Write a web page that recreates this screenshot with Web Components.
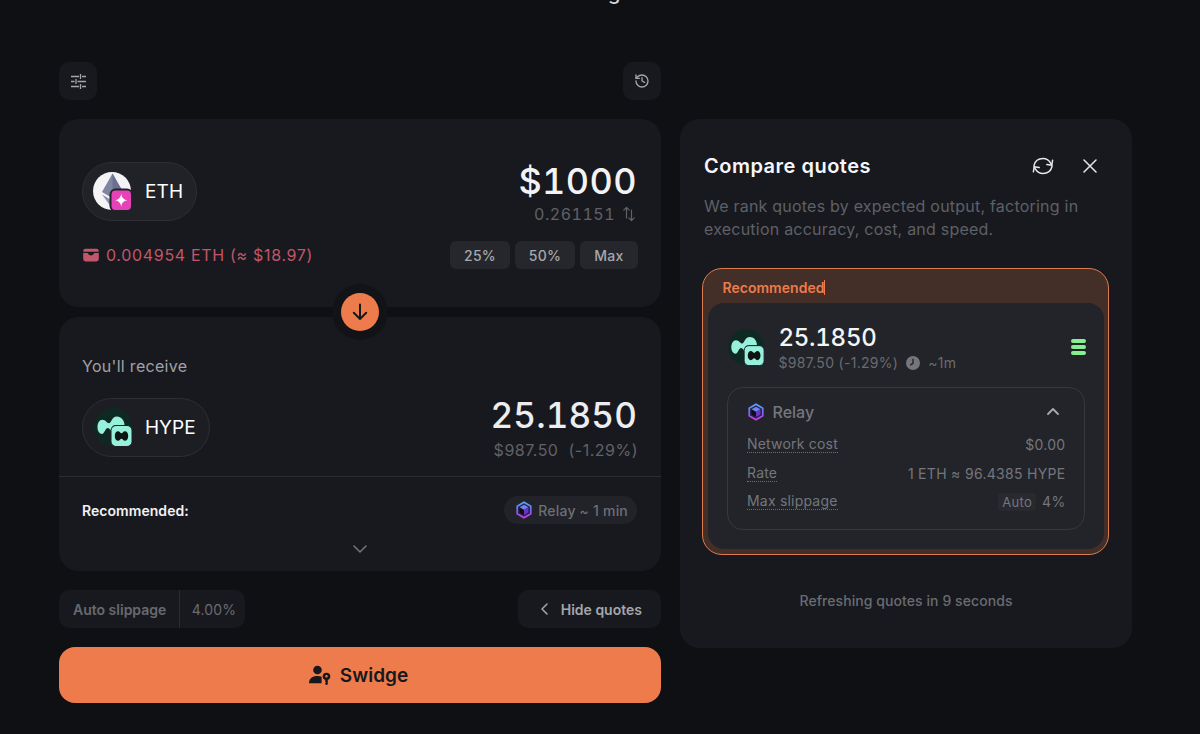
<!DOCTYPE html>
<html lang="en">
<head>
<meta charset="utf-8">
<title>Swidge</title>
<style>
  html, body { margin: 0; height: 100%; background: #0f1014; overflow: hidden; }
  body { font-family: Inter, "Liberation Sans", sans-serif; color: #fff; }
</style>
</head>
<body>
<swap-page></swap-page>

<script>
const ICONS = {
  sliders: `<svg viewBox="0 0 15 15" width="15" height="15" fill="none" stroke="currentColor" stroke-width="1.3"><path d="M0 2.500H8M11 2.500H15M0 7.500H3.500M6.500 7.500H15M0 12.500H8M11 12.500H15M9.500 0V5M5 5V10M9.500 10V15"/></svg>`,
  history: `<svg viewBox="0 0 24 24" width="16" height="16" fill="none" stroke="currentColor" stroke-width="2" stroke-linecap="round" stroke-linejoin="round"><path d="M3 12a9 9 0 1 0 9-9 9.700 9.700 0 0 0-6.700 2.700L3 8"/><path d="M3 3v5h5"/><path d="M12 7v5l4 2"/></svg>`,
  swap: `<svg viewBox="0 0 14 16" width="14" height="16" fill="none" stroke="currentColor" stroke-width="1.200" stroke-linecap="round" stroke-linejoin="round"><path d="M4.500 12V1.500M1.800 4.200l2.700-2.700 2.700 2.700"/><path d="M9.500 4v10.500M6.800 11.800l2.700 2.700 2.700-2.700"/></svg>`,
  wallet: `<svg viewBox="0 0 16 14" width="16" height="14"><path fill="currentColor" d="M2.600 0.800h10.800A2.400 2.400 0 0 1 15.800 3.200v.5H.2v-.5A2.400 2.400 0 0 1 2.600.8Z"/><path fill="currentColor" d="M.2 5h4.600c.5 1.500 1.700 2.400 3.200 2.400S10.700 6.500 11.200 5h4.600v6a2.400 2.400 0 0 1-2.400 2.400H2.600A2.400 2.400 0 0 1 .2 11Z"/></svg>`,
  down: `<svg viewBox="0 0 20 20" width="20" height="20" fill="none" stroke="#17181c" stroke-width="2" stroke-linecap="round" stroke-linejoin="round"><path d="M10 2.500V17M3.800 10.800 10 17l6.200-6.200"/></svg>`,
  chevDown: `<svg viewBox="0 0 16 10" width="16" height="10" fill="none" stroke="currentColor" stroke-width="1.500" stroke-linecap="round" stroke-linejoin="round"><path d="M2 2l6 6 6-6"/></svg>`,
  chevUp: `<svg viewBox="0 0 14 9" width="14" height="9" fill="none" stroke="currentColor" stroke-width="1.800" stroke-linecap="round" stroke-linejoin="round"><path d="M2 7 7 2l5 5"/></svg>`,
  chevLeft: `<svg viewBox="0 0 9 14" width="9" height="14" fill="none" stroke="currentColor" stroke-width="1.500" stroke-linecap="round" stroke-linejoin="round"><path d="M7 2 2 7l5 5"/></svg>`,
  refresh: `<svg viewBox="0 0 22 18" width="22" height="18" fill="none" stroke="currentColor" stroke-width="1.500" stroke-linecap="round" stroke-linejoin="round"><path d="M2 8.500C3 4.200 6.500 1.500 11 1.500c3.200 0 5.800 1.400 7.500 4.300l1.300 2.500"/><path d="M20.600 3.200 19.800 8.300l-5-.9"/><path d="M20 9.500c-1 4.300-4.500 7-9 7-3.200 0-5.800-1.400-7.500-4.300L2.200 9.700"/><path d="M1.400 14.800 2.200 9.700l5 .9"/></svg>`,
  close: `<svg viewBox="0 0 14 14" width="14" height="14" fill="none" stroke="currentColor" stroke-width="1.500" stroke-linecap="round"><path d="M1 1l12 12M13 1 1 13"/></svg>`,
  clock: `<svg viewBox="0 0 14 14" width="14" height="14"><circle cx="7" cy="7" r="7" fill="#74767c"/><path d="M7 3.200V7.300L4.600 8.800" fill="none" stroke="#22242a" stroke-width="1.400" stroke-linecap="round" stroke-linejoin="round"/></svg>`,
  bars: `<svg viewBox="0 0 16 16" width="16" height="16"><rect y="0" width="15" height="4" rx="2" fill="#86ef8f"/><rect y="6" width="15" height="4" rx="2" fill="#86ef8f"/><rect y="12" width="15" height="4" rx="2" fill="#86ef8f"/></svg>`,
  userKey: `<svg viewBox="0 0 22 20" width="22" height="20" fill="#17181c"><circle cx="8.500" cy="5" r="4.300"/><path d="M0 18.200c0-4.700 3.500-7.200 8.500-7.200 1.500 0 2.900.2 4.100.7v6.500H0Z"/><path fill-rule="evenodd" d="M17.500 7.800a3.700 3.700 0 0 1 1.300 7.200v4.200l-1.300 1-1.300-1v-.9l.8-.8-.8-.8V15a3.700 3.700 0 0 1 1.300-7.200Zm0 2.200a1.300 1.300 0 1 0 0 2.600 1.300 1.300 0 0 0 0-2.600Z"/></svg>`,
  eth: `<svg viewBox="0 0 40 40" width="40" height="40"><circle cx="19" cy="19" r="19" fill="#f4f4f6"/><path d="M19.500 1.500 9 20l10.500 6.200L30 20Z" fill="#7f84a3"/><path d="M19.500 1.500V26.200L30 20Z" fill="#6b7090"/><path d="M9 22.500 19.500 37 30 22.500l-10.500 6.200Z" fill="#8d91ad"/><rect x="17.500" y="17.500" width="21.500" height="21.500" rx="5" fill="#e643b8" stroke="#22232a" stroke-width="2"/><path d="M28.200 21.500c.5 4 2 5.900 6.300 6.800-4.300.8-5.800 2.700-6.300 6.800-.5-4.100-2-6-6.300-6.800 4.300-.9 5.800-2.800 6.300-6.800Z" fill="#fff"/></svg>`,
  hype: `<svg viewBox="0 0 40 40" width="40" height="40"><circle cx="19" cy="19" r="19" fill="#0f2922"/><path d="M3.500 19c0-4 2-7.200 4.800-7.200 3.600 0 4.500 3.500 6.700 3.500 2.300 0 2.500-6.800 8-6.800 4 0 7.500 3.700 7.500 8.500H22c-3 0-4.500 1.800-4.500 4v2.500c-1-1-1.800-3.500-3.800-3.500-2.400 0-3.200 6-5.700 6-2.600 0-4.500-3-4.500-6.500Z" fill="#97f0dc"/><rect x="17" y="17.500" width="21" height="21" rx="5" fill="#97f0dc" stroke="#1e2026" stroke-width="1"/><path d="M20.800 28c0-3 1.400-4.800 3.300-4.800 1.700 0 2.200 2 3.400 2s1.700-2 3.400-2c1.900 0 3.300 1.800 3.300 4.800s-1.400 4.800-3.300 4.800c-1.700 0-2.200-2-3.400-2s-1.700 2-3.400 2c-1.900 0-3.300-1.800-3.300-4.800Z" fill="#0c1512"/></svg>`,
  relay: `<svg viewBox="0 0 18 18" width="18" height="18"><defs><linearGradient id="r" x1="0" y1="0" x2="0" y2="1"><stop offset="0" stop-color="#58a6f7"/><stop offset=".5" stop-color="#6d6af2"/><stop offset="1" stop-color="#d03be6"/></linearGradient></defs><path d="M9 1.300 15.800 5.200V12.800L9 16.700 2.200 12.800V5.200Z" fill="#27204a" stroke="url(#r)" stroke-width="1.700" stroke-linejoin="round"/><path d="M9 3.800 13.400 6.300 9 8.800 4.600 6.300Z" fill="#6f86ee"/><path d="M13.400 6.300V11.400L9 13.900V8.800Z" fill="#6a35c4"/><path d="M4.600 6.800 9 9.300V13.900L4.600 11.400Z" fill="#0f0e16"/></svg>`
};

const BASE = `* { box-sizing: border-box; } svg { display: block; flex: none; }`;

function el(name, css, html) {
  customElements.define(name, class extends HTMLElement {
    connectedCallback() {
      if (this.shadowRoot) return;
      this.attachShadow({ mode: "open" });
      const icon = this.getAttribute("icon");
      this.shadowRoot.innerHTML = `<style>${BASE}${css}</style>` +
        html.replace(/\{icon\}/g, icon ? ICONS[icon] : "");
    }
  });
}

el("icon-button", `
  :host { display: flex; width: 38px; height: 38px; border-radius: 10px; background: #18191e;
    align-items: center; justify-content: center; color: #a4a6ab; }
`, `{icon}`);

el("token-pill", `
  :host { display: flex; align-items: center; height: 59px; border-radius: 30px; background: #202227;
    border: 1px solid #2d2f35; color: #fff; font-size: 19px; letter-spacing: .2px; }
  .logo { width: 40px; height: 40px; margin-left: 10px; margin-right: 12px; }
  :host([icon=hype]) .logo { margin-left: 11px; margin-right: 11px; margin-top: 1px; }
  :host([icon=hype]) { background: #1c1e23; letter-spacing: 0; }
  .text { padding-right: 15px; margin-top: -1px; }
`, `<span class="logo">{icon}</span><span class="text"><slot></slot></span>`);

el("pct-button", `
  :host { display: flex; align-items: center; justify-content: center; height: 28px; border-radius: 6px;
    background: #25272c; color: #a6a8ad; font-size: 14px; font-weight: 500; letter-spacing: .3px; }
`, `<slot></slot>`);

el("swap-card", `
  :host { display: block; background: #18191e; border-radius: 20px; }
`, `<slot></slot>`);

el("from-section", `
  :host { display: block; height: 188px; padding: 43px 24px 0 23px; }
  .top { display: flex; justify-content: space-between; }
  .amounts { display: flex; flex-direction: column; align-items: flex-end; }
  .usd { font-size: 36px; line-height: 36px; font-weight: 500; letter-spacing: .4px; color: #f3f3f5; margin-top: 1px;
    font-variant-numeric: tabular-nums; }
  .qty { display: flex; align-items: center; gap: 7px; margin-top: 5px; font-size: 16px; line-height: 20px;
    letter-spacing: .5px; color: #606267; padding-right: 1px; font-variant-numeric: tabular-nums; }
  .bottom { display: flex; justify-content: space-between; align-items: center; margin-top: 17px; }
  .bal { display: flex; align-items: center; gap: 7px; color: #c2566a; font-size: 16px; letter-spacing: .68px; margin-left: 1px; }
  .pcts { display: flex; gap: 5px; margin-right: -1px; }
  .pcts pct-button { width: 60px; }
  .pcts pct-button:last-child { width: 58px; }
`, `
  <div class="top">
    <token-pill icon="eth" style="width:115px">ETH</token-pill>
    <div class="amounts">
      <div class="usd">$1000</div>
      <div class="qty">0.261151 ${ICONS.swap}</div>
    </div>
  </div>
  <div class="bottom">
    <div class="bal">${ICONS.wallet}<span>0.004954 ETH (≈ $18.97)</span></div>
    <div class="pcts">
      <pct-button>25%</pct-button><pct-button>50%</pct-button><pct-button>Max</pct-button>
    </div>
  </div>
`);

el("to-section", `
  :host { display: block; height: 254px; }
  .main { height: 160px; padding: 39px 24px 0 23px; border-bottom: 1px solid #2a2c31; }
  .label { font-size: 16px; line-height: 20px; color: #a0a2a7; letter-spacing: .3px; }
  .row { display: flex; justify-content: space-between; margin-top: 22px; }
  .amounts { display: flex; flex-direction: column; align-items: flex-end; margin-top: -1px; }
  .out { font-size: 35px; line-height: 36px; font-weight: 500; letter-spacing: .15px; color: #ededf0;
    font-variant-numeric: tabular-nums; }
  .fiat { font-size: 16px; line-height: 20px; margin: 7px -1px 0 0; color: #606267; letter-spacing: .5px; white-space: pre; }
  .rec { display: flex; justify-content: space-between; align-items: center; padding: 19px 24px 0 23px; }
  .rec b { font-size: 14px; font-weight: 600; color: #f2f2f4; letter-spacing: .05px; }
  .route { display: flex; align-items: center; gap: 5px; height: 28px; padding: 0 9px 0 11px; border-radius: 14px;
    background: #212328; color: #6d6f75; font-size: 14px; font-weight: 500; letter-spacing: .2px; }
  .more { display: flex; justify-content: center; margin-top: 20px; color: #74767c; }
`, `
  <div class="main">
    <div class="label">You'll receive</div>
    <div class="row">
      <token-pill icon="hype" style="width:128px">HYPE</token-pill>
      <div class="amounts">
        <div class="out">25.1850</div>
        <div class="fiat">$987.50  (-1.29%)</div>
      </div>
    </div>
  </div>
  <div class="rec">
    <b>Recommended:</b>
    <div class="route">${ICONS.relay}<span>Relay ~ 1 min</span></div>
  </div>
  <div class="more">${ICONS.chevDown}</div>
`);

el("flip-button", `
  :host { display: flex; width: 38px; height: 38px; border-radius: 50%; background: #ee7b4b;
    align-items: center; justify-content: center; box-shadow: 0 0 0 9px #121317; }
`, `${ICONS.down}`);

el("slippage-chip", `
  :host { display: flex; align-items: stretch; height: 38px; border-radius: 10px; background: #18191e;
    font-size: 14px; font-weight: 600; color: #68696f; }
  .k { display: flex; align-items: center; padding: 0 12.500px 0 14px; border-right: 1px solid #2a2c31; }
  .v { display: flex; align-items: center; padding: 0 9px 0 12px; font-weight: 400; letter-spacing: .1px; color: #6a6c72; }
`, `<span class="k"><slot name="k"></slot></span><span class="v"><slot name="v"></slot></span>`);

el("hide-button", `
  :host { display: flex; align-items: center; gap: 12px; height: 38px; padding: 0 19px 0 22px; border-radius: 10px;
    background: #18191e; font-size: 14px; font-weight: 600; color: #a4a6ab; }
`, `${ICONS.chevLeft}<slot></slot>`);

el("swidge-button", `
  :host { display: flex; align-items: center; justify-content: center; gap: 9px; height: 56px; border-radius: 16px;
    background: #ee7b4b; color: #17181c; font-size: 19px; font-weight: 600; padding-right: 3px; }
`, `${ICONS.userKey}<slot></slot>`);

el("detail-row", `
  :host { display: flex; justify-content: space-between; align-items: center; height: 28.500px;
    font-size: 14px; color: #74767c; letter-spacing: .2px; }
  .k { border-bottom: 1px dotted #6c6e74; line-height: 16px; }
  .v { display: flex; align-items: center; gap: 6px; letter-spacing: .3px; }
`, `<span class="k"><slot name="k"></slot></span><span class="v"><slot name="v"></slot></span>`);

el("quote-card", `
  :host { display: block; height: 287px; border: 1.500px solid #dd7c50; border-radius: 20px; background: #442e28;
    padding: 0 4.500px 4.500px; }
  .tag { display: flex; align-items: center; height: 33.500px; padding-left: 15px; color: #ee7b4b; font-size: 14px;
    font-weight: 600; letter-spacing: .02px; padding-top: 4px; }
  .caret { width: 1px; height: 15px; background: #ee7b4b; }
  .body { height: 246px; background: #22242a; border-radius: 16px; padding: 22px 19px 0 19px; }
  .head { display: flex; align-items: flex-start; gap: 14px; }
  .logo { width: 38px; height: 38px; margin: 4px -1px 0 1px; }
  .logo svg { width: 38px; height: 38px; }
  .txt { flex: 1; }
  .big { font-size: 24px; line-height: 26px; font-weight: 500; color: #f4f4f6; letter-spacing: -.25px;
    font-variant-numeric: tabular-nums; }
  .sub { display: flex; align-items: center; gap: 8px; font-size: 14px; line-height: 20px; margin-top: 2px;
    color: #696b71; letter-spacing: .3px; }
  .bars { margin: 14px -2px 0 0; }
  .box { height: 143px; margin-top: 14px; border: 1px solid #36383e; border-radius: 16px; padding: 0 18px 0 19.500px; }
  .boxhead { display: flex; justify-content: space-between; align-items: center; height: 43px; padding-top: 5px; }
  .name { display: flex; align-items: center; gap: 8px; font-size: 16px; font-weight: 500; color: #75777d; margin-left: -.5px; }
  .up { color: #a8aaaf; margin-right: 6px; }
  .auto { background: #282a2f; border-radius: 4px; padding: 0 4px; font-size: 13px; line-height: 18px; }
  .v-wrap { display: flex; gap: 6px; align-items: center; }
`, `
  <div class="tag"><span>Recommended</span><span class="caret"></span></div>
  <div class="body">
    <div class="head">
      <span class="logo">${ICONS.hype}</span>
      <div class="txt">
        <div class="big">25.1850</div>
        <div class="sub"><span>$987.50 (-1.29%)</span>${ICONS.clock}<span>~1m</span></div>
      </div>
      <span class="bars">${ICONS.bars}</span>
    </div>
    <div class="box">
      <div class="boxhead">
        <span class="name">${ICONS.relay}Relay</span>
        <span class="up">${ICONS.chevUp}</span>
      </div>
      <div>
        <detail-row><span slot="k">Network cost</span><span slot="v">$0.00</span></detail-row>
        <detail-row><span slot="k">Rate</span><span slot="v">1 ETH ≈ 96.4385 HYPE</span></detail-row>
        <detail-row><span slot="k">Max slippage</span><span slot="v" class="v-wrap"><span class="auto">Auto</span><span>4%</span></span></detail-row>
      </div>
    </div>
  </div>
`);

el("quote-panel", `
  :host { display: block; height: 529px; background: #18191e; border-radius: 20px; padding: 34px 23px 0 22px; }
  .head { display: flex; align-items: center; height: 26px; padding-left: 2px; }
  h2 { flex: 1; margin: 0; font-size: 20px; line-height: 26px; font-weight: 600; color: #f6f6f8; letter-spacing: .5px; }
  .acts { display: flex; align-items: center; gap: 29px; color: #e6e6e9; padding-right: 12px; }
  p { margin: 16px 0 0; padding-left: 2px; font-size: 16px; line-height: 23px; color: #5e6066; letter-spacing: .22px; }
  quote-card { margin-top: 27px; }
  .foot { margin-top: 37px; padding-left: 1px; text-align: center; font-size: 14px; font-weight: 500; line-height: 18px; color: #6a6c72; letter-spacing: .07px; }
`, `
  <div class="head">
    <h2>Compare quotes</h2>
    <div class="acts">${ICONS.refresh}${ICONS.close}</div>
  </div>
  <p>We rank quotes by expected output, factoring in<br>execution accuracy, cost, and speed.</p>
  <quote-card></quote-card>
  <div class="foot">Refreshing quotes in 9 seconds</div>
`);

el("swap-page", `
  :host { display: block; width: 1200px; height: 734px; overflow: hidden; }
  .clip { height: 4px; overflow: hidden; padding-left: 608px; }
  .clip span { display: block; margin-top: -17px; font-size: 20px; line-height: 20px; font-weight: 500; color: #d6d6d9; }
  .grid { display: grid; grid-template-columns: 602px 452px; column-gap: 19px; padding: 58px 0 0 59px; }
  .left { display: flex; flex-direction: column; }
  .bar { display: flex; justify-content: space-between; height: 38px; margin-bottom: 19px; }
  .stack { position: relative; display: flex; flex-direction: column; gap: 10px; }
  flip-button { position: absolute; left: 282px; top: 174px; }
  .controls { display: flex; justify-content: space-between; margin-top: 19px; }
  swidge-button { margin-top: 19px; }
  .right { padding-top: 57px; }
`, `
  <div class="clip"><span>g</span></div>
  <div class="grid">
    <div class="left">
      <div class="bar"><icon-button icon="sliders"></icon-button><icon-button icon="history"></icon-button></div>
      <div class="stack">
        <swap-card><from-section></from-section></swap-card>
        <swap-card><to-section></to-section></swap-card>
        <flip-button></flip-button>
      </div>
      <div class="controls">
        <slippage-chip><span slot="k">Auto slippage</span><span slot="v">4.00%</span></slippage-chip>
        <hide-button>Hide quotes</hide-button>
      </div>
      <swidge-button>Swidge</swidge-button>
    </div>
    <div class="right"><quote-panel></quote-panel></div>
  </div>
`);
</script>
</body>
</html>
